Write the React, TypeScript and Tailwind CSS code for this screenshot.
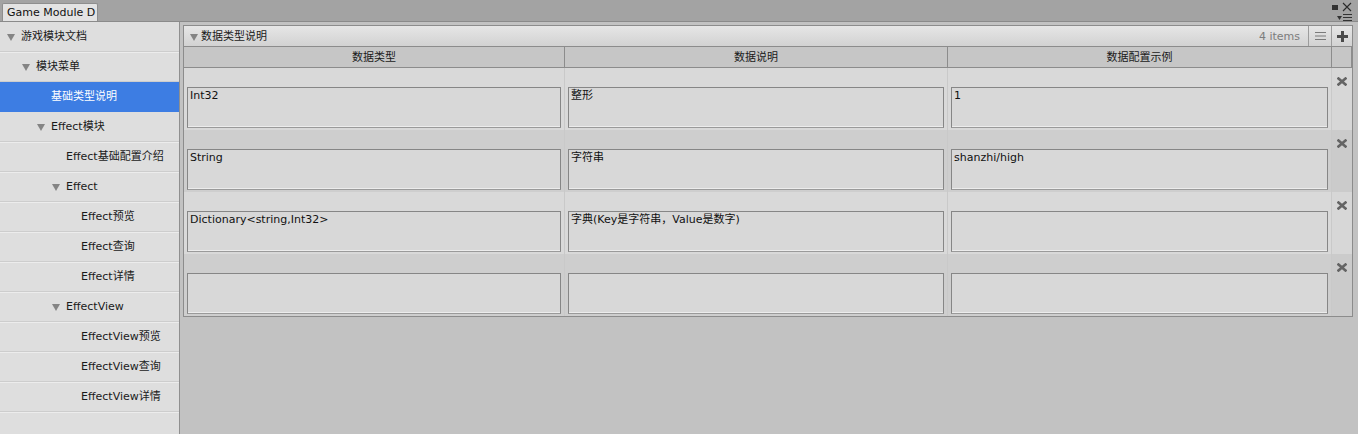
import React from "react"

type NavItem = { label: string; level: number; folder?: boolean; selected?: boolean }

const navItems: NavItem[] = [
  { label: "游戏模块文档", level: 0, folder: true },
  { label: "模块菜单", level: 1, folder: true },
  { label: "基础类型说明", level: 2, selected: true },
  { label: "Effect模块", level: 2, folder: true },
  { label: "Effect基础配置介绍", level: 3 },
  { label: "Effect", level: 3, folder: true },
  { label: "Effect预览", level: 4 },
  { label: "Effect查询", level: 4 },
  { label: "Effect详情", level: 4 },
  { label: "EffectView", level: 3, folder: true },
  { label: "EffectView预览", level: 4 },
  { label: "EffectView查询", level: 4 },
  { label: "EffectView详情", level: 4 },
]

const rows = [
  ["Int32", "整形", "1"],
  ["String", "字符串", "shanzhi/high"],
  ["Dictionary<string,Int32>", "字典(Key是字符串，Value是数字)", ""],
  ["", "", ""],
]

const indents = ["pl-[7px]", "pl-[22px]", "pl-[37px]", "pl-[52px]", "pl-[67px]"]

function Arrow() {
  return (
    <svg width="8" height="7" viewBox="0 0 8 7">
      <polygon points="0,0 8,0 4,7" fill="#848484" />
    </svg>
  )
}

function RemoveIcon() {
  return (
    <svg width="10" height="9" viewBox="0 0 10 9">
      <path d="M1.5 1.5 L8.5 7.5 M8.5 1.5 L1.5 7.5" stroke="#646464" strokeWidth="2.6" strokeLinecap="square" />
    </svg>
  )
}

function Cell({ text }: { text: string }) {
  return (
    <div className="px-[3px] pt-[19px] pb-[2px] border-r border-[#c9c9c9]">
      <div className="h-[41px] border border-[#868686] border-b-[#9a9a9a] bg-[#d8d8d8] shadow-[inset_0_-1px_0_#ececec] px-[2px] pt-[1px] text-[#111] leading-[13px] whitespace-pre overflow-hidden">
        {text}
      </div>
    </div>
  )
}

export default function App() {
  return (
    <div className="w-[1358px] h-[434px] flex flex-col bg-[#a3a3a3] text-[11px] text-[#1a1a1a] font-['DejaVu_Sans','Noto_Sans_CJK_SC',sans-serif] overflow-hidden">
      {/* window tab bar */}
      <div className="h-[22px] relative border-b border-[#8a8a8a] flex items-end pl-[2px]">
        <div className="w-[96px] h-[18px] bg-[#e3e3e3] border border-b-0 border-[#8e8e8e] rounded-t-[2px] pl-[4px]">
          <span className="text-[11px] leading-[18px] text-[#111] whitespace-nowrap">Game Module D</span>
        </div>
        <div className="absolute right-[6px] top-[2px] flex flex-col items-end">
          <div className="flex items-center gap-[4px]">
            <div className="w-[6px] h-[5px] bg-[#333] border border-[#333]" />
            <svg width="10" height="10" viewBox="0 0 10 10">
              <path d="M1 1 L9 9 M9 1 L1 9" stroke="#2a2a2a" strokeWidth="1.1" />
            </svg>
          </div>
          <div className="flex items-center gap-[1px] mt-[2px]">
            <svg width="5" height="4" viewBox="0 0 5 4">
              <polygon points="0,0 5,0 2.5,4" fill="#333" />
            </svg>
            <svg width="9" height="7" viewBox="0 0 9 7">
              <path d="M0 0.5 H9 M0 3.5 H9 M0 6.5 H9" stroke="#333" strokeWidth="1" />
            </svg>
          </div>
        </div>
      </div>

      <div className="flex-1 flex min-h-0">
        {/* tree sidebar */}
        <div className="w-[180px] bg-[#dedede] border-r border-[#8f8f8f] flex flex-col">
          {navItems.map((item) => (
            <div
              key={item.label}
              className={`h-[30px] flex items-center gap-[6px] pt-[2px] border-b ${indents[item.level]} ${
                item.selected ? "bg-[#3d7de3] text-white border-[#3d7de3]" : "border-[#cdcdcd] shadow-[0_1px_0_#ececec]"
              }`}
            >
              {item.folder ? <Arrow /> : <span className="w-[8px]" />}
              <span className="whitespace-nowrap">{item.label}</span>
            </div>
          ))}
        </div>

        {/* content */}
        <div className="flex-1 bg-[#c2c2c2] pl-[3px] pr-[5px] pt-[3px]">
          <div className="border border-[#8c8c8c] bg-[#d9d9d9]">
            <div className="h-[21px] flex items-center bg-linear-to-b from-[#e6e6e6] to-[#d2d2d2] border-b border-[#8c8c8c]">
              <div className="flex-1 flex items-center gap-[3px] pl-[6px] pt-[3px]">
                <Arrow />
                <span>数据类型说明</span>
              </div>
              <span className="text-[#7c7c7c] pr-[8px] pt-[2px]">4 items</span>
              <div className="w-[23px] h-full flex items-center justify-center border-l border-[#9c9c9c]">
                <svg width="11" height="8" viewBox="0 0 11 8">
                  <path d="M0 0.5 H11 M0 4 H11 M0 7.5 H11" stroke="#7a7a7a" strokeWidth="1" />
                </svg>
              </div>
              <div className="w-[21px] h-full flex items-center justify-center border-l border-[#9c9c9c]">
                <svg width="11" height="11" viewBox="0 0 11 11">
                  <path d="M5.5 0 V11 M0 5.5 H11" stroke="#4a4a4a" strokeWidth="3" />
                </svg>
              </div>
            </div>

            <div className="grid grid-cols-[381px_383px_384px_1fr]">
              {["数据类型", "数据说明", "数据配置示例", ""].map((h, i) => (
                <div
                  key={i}
                  className="h-[21px] flex items-center justify-center pt-[3px] bg-[#c6c6c6] border-b border-[#8c8c8c] border-r border-r-[#8c8c8c] last:border-r-0"
                >
                  {h}
                </div>
              ))}
              {rows.map((r, ri) => (
                <React.Fragment key={ri}>
                  {r.map((t, ci) => (
                    <div key={ci} className={ri % 2 === 0 ? "bg-[#d9d9d9]" : "bg-[#cecece]"}>
                      <Cell text={t} />
                    </div>
                  ))}
                  <div className={`flex justify-center pt-[9px] ${ri % 2 === 0 ? "bg-[#d7d7d7]" : "bg-[#cbcbcb]"}`}>
                    <RemoveIcon />
                  </div>
                </React.Fragment>
              ))}
            </div>
          </div>
        </div>
      </div>
    </div>
  )
}
